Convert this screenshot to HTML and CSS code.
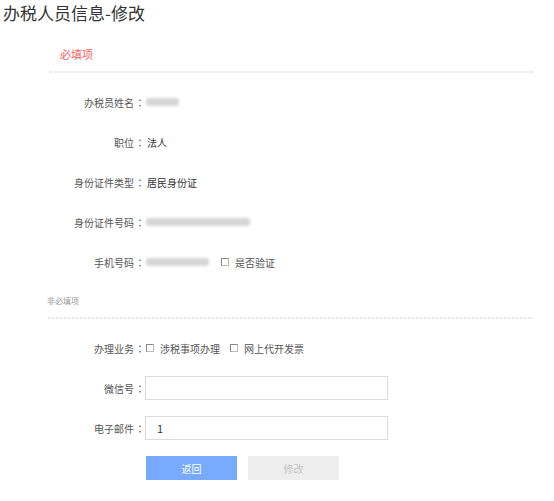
FILE: index.html
```html
<!DOCTYPE html>
<html lang="zh-CN">
<head>
<meta charset="utf-8">
<title>办税人员信息-修改</title>
<link rel="stylesheet" href="styles.css">
</head>
<body>
<h1 class="title">办税人员信息-修改</h1>

<div class="section-head required">必填项</div>
<div class="divider"></div>

<div class="form">
  <div class="row">
    <span class="label">办税员姓名<span class="colon">：</span></span>
    <span class="blur" style="width:33px"></span>
  </div>
  <div class="row">
    <span class="label">职位<span class="colon">：</span></span>
    <span class="value">法人</span>
  </div>
  <div class="row">
    <span class="label">身份证件类型<span class="colon">：</span></span>
    <span class="value">居民身份证</span>
  </div>
  <div class="row">
    <span class="label">身份证件号码<span class="colon">：</span></span>
    <span class="blur" style="width:104px"></span>
  </div>
  <div class="row">
    <span class="label">手机号码<span class="colon">：</span></span>
    <span class="blur" style="width:63px"></span>
    <label class="check phone-check"><span class="box"></span>是否验证</label>
  </div>
</div>

<div class="section-head optional">非必填项</div>
<div class="divider divider-2"></div>

<div class="form">
  <div class="row">
    <span class="label">办理业务<span class="colon">：</span></span>
    <label class="check"><span class="box"></span>涉税事项办理</label>
    <label class="check"><span class="box"></span>网上代开发票</label>
  </div>
  <div class="row">
    <span class="label">微信号<span class="colon">：</span></span>
    <div class="input"></div>
  </div>
  <div class="row">
    <span class="label">电子邮件<span class="colon">：</span></span>
    <div class="input">1</div>
  </div>
  <div class="buttons">
    <button class="btn btn-primary">返回</button>
    <button class="btn btn-disabled">修改</button>
  </div>
</div>
</body>
</html>
```

FILE: styles.css
```css
* { box-sizing: border-box; }

html, body {
  margin: 0;
  padding: 0;
  background: #fff;
}

body {
  font-family: "Noto Sans CJK SC", "Noto Sans", sans-serif;
  color: #555;
  font-size: 10px;
  width: 554px;
}

.title {
  margin: 0;
  padding-left: 3px;
  font-size: 17px;
  line-height: 26px;
  font-weight: normal;
  color: #333;
}

.section-head.required {
  margin-top: 18px;
  padding-left: 60px;
  font-size: 11px;
  line-height: 20px;
  color: #ff5a5a;
}

.divider {
  margin: 7px 0 0 50px;
  width: 483px;
  height: 2px;
  background: repeating-linear-gradient(to right, #ebebeb 0 3px, transparent 3px 4px);
}

.divider-2 {
  margin: 9px 0 0 48px;
  width: 485px;
}

.form {
  margin-top: 9px;
}

.row {
  display: flex;
  align-items: center;
  height: 40px;
}

.label {
  width: 146px;
  flex: none;
  text-align: right;
  color: #555;
  white-space: nowrap;
}

.colon {
  font-family: "Noto Sans CJK TC", "Noto Sans CJK SC", sans-serif;
  display: inline-block;
  width: 12px;
  text-align: center;
}

.value {
  padding-left: 1px;
  color: #333;
}

.blur {
  display: inline-block;
  height: 8px;
  background: #d6d6d6;
  border-radius: 3px;
  filter: blur(1.6px);
}

.check {
  display: inline-flex;
  align-items: center;
  margin-left: 0;
  margin-right: 10px;
  color: #555;
}

.check .box {
  display: inline-block;
  width: 8px;
  height: 8px;
  border: 1px solid #888;
  border-right-color: #bbb;
  border-bottom-color: #bbb;
  margin-right: 6px;
  background: #fff;
}

.phone-check {
  margin-left: 12px;
}

.section-head.optional {
  margin-top: 12px;
  padding-left: 47px;
  font-size: 8px;
  line-height: 14px;
  color: #999;
}

.input {
  width: 243px;
  height: 24px;
  margin-left: -1px;
  border: 1px solid #dcdcdc;
  padding-left: 11px;
  line-height: 22px;
  font-size: 11px;
  color: #335;
  background: #fff;
}

.buttons {
  display: flex;
  gap: 11px;
  margin-top: 8px;
  padding-left: 146px;
}

.btn {
  width: 91px;
  height: 24px;
  border: none;
  padding: 0;
  font-family: inherit;
  font-size: 10px;
}

.btn-primary {
  background: #78aaff;
  color: #fff;
}

.btn-disabled {
  background: #eeeeee;
  color: #c4c4c4;
}
```
